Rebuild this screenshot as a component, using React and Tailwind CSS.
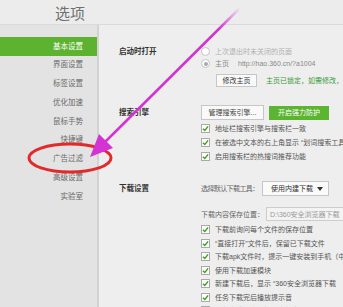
import React from 'react';

const font = "font-['Liberation_Sans','Noto_Sans_CJK_SC',sans-serif]";

const menu = ['基本设置', '界面设置', '标签设置', '优化加速', '鼠标手势', '快捷键', '广告过滤', '高级设置', '实验室'];

const Check = () => (
  <span className="w-[9px] h-[9px] border border-[#a9a9a9] bg-white flex items-center justify-center shrink-0">
    <svg width="7" height="7" viewBox="0 0 8 8">
      <path d="M1 4.2 L3.2 6.3 L7 1.6" fill="none" stroke="#3f9e22" strokeWidth="1.6" />
    </svg>
  </span>
);

const CheckRow = ({ text, h = 'h-[14px]' }) => (
  <div className={`${h} flex items-center gap-[5px] text-[#555] whitespace-nowrap`}>
    <Check />
    <span>{text}</span>
  </div>
);

const Radio = ({ on }) => (
  <span className="w-[9px] h-[9px] rounded-full border border-[#c4c4c4] bg-white flex items-center justify-center shrink-0">
    {on && <span className="w-[4px] h-[4px] rounded-full bg-[#a8a8a8]" />}
  </span>
);

export default function App() {
  return (
    <div className={`relative w-[343px] h-[307px] overflow-hidden bg-[#eeeeee] text-[7px] leading-none ${font}`}>
      {/* Header */}
      <div className="h-[25px] bg-[#ececec] border-b border-[#dadada] flex items-center pl-[55px]">
        <span className="text-[15px] text-[#707070] font-['Noto_Sans_CJK_SC',sans-serif]">选项</span>
      </div>

      <div className="flex h-[282px]">
        {/* Sidebar */}
        <div className="w-[99px] shrink-0 bg-[#e3e3e3] border-r-2 border-[#d2d2d2] pt-[12px] text-[7.5px]">
          {menu.map((m, i) => (
            <div
              key={m}
              className={`h-[18.75px] flex items-center justify-end pr-[14px] ${
                i === 0 ? 'bg-[#5db230] text-white' : 'text-[#6a6a6a]'
              }`}
            >
              {m}
            </div>
          ))}
        </div>

        {/* Content */}
        <div className="flex-1 pl-[20px] pt-[20px] whitespace-nowrap">
          {/* 启动时打开 */}
          <div className="flex">
            <div className="w-[82px] h-[12.5px] flex items-center text-[#333] font-bold text-[7.5px]">启动时打开</div>
            <div className="flex flex-col">
              <div className="h-[12.5px] flex items-center gap-[5px] text-[#b0b0b0]">
                <Radio />
                <span>上次退出时未关闭的页面</span>
              </div>
              <div className="h-[12.5px] flex items-center gap-[5px] text-[#8a8a8a]">
                <Radio on />
                <span>主页</span>
                <span className="ml-[4px]">http://hao.360.cn/?a1004</span>
              </div>
              <div className="mt-[4px] flex items-center pl-[15px]">
                <span className="h-[13px] w-[41px] border border-[#c6c6c6] bg-[#f9f9f9] text-[#333] flex items-center justify-center">
                  修改主页
                </span>
                <span className="ml-[9px] text-[#3a9b37]">主页已锁定，如需修改，</span>
              </div>
            </div>
          </div>

          {/* 搜索引擎 */}
          <div className="flex mt-[18px]">
            <div className="w-[82px] h-[15px] flex items-center text-[#333] font-bold text-[7.5px]">搜索引擎</div>
            <div className="flex flex-col">
              <div className="h-[15px] flex items-center gap-[5px]">
                <span className="h-[15px] w-[63px] border border-[#c6c6c6] bg-[#f9f9f9] text-[#444] flex items-center justify-center">
                  管理搜索引擎...
                </span>
                <span className="h-[14px] w-[60px] bg-[#5cb531] text-white flex items-center justify-center">
                  开启强力防护
                </span>
              </div>
              <div className="mt-[1px]">
                <CheckRow text="地址栏搜索引擎与搜索栏一致" />
                <CheckRow text="在被选中文本的右上角显示 “划词搜索工具”" />
                <CheckRow text="启用搜索栏的热搜词推荐功能" />
              </div>
            </div>
          </div>

          {/* 下载设置 */}
          <div className="flex mt-[18px]">
            <div className="w-[82px] h-[15px] flex items-center text-[#333] font-bold text-[7.5px]">下载设置</div>
            <div className="flex flex-col">
              <div className="h-[15px] flex items-center text-[#666]">
                <span className="w-[61px] tracking-[-0.6px]">选择默认下载工具：</span>
                <span className="h-[15px] w-[67px] border border-[#c6c6c6] bg-[#fafafa] text-[#333] flex items-center justify-between pl-[8px] pr-[5px]">
                  使用内建下载
                  <svg width="6" height="4" viewBox="0 0 6 4">
                    <path d="M0 0 H6 L3 4 Z" fill="#333" />
                  </svg>
                </span>
              </div>
              <div className="mt-[11px] h-[14px] flex items-center text-[#666]">
                <span className="w-[65px]">下载内容保存位置：</span>
                <span className="h-[14px] w-[100px] border border-[#cdcdcd] bg-[#f3f3f3] text-[#9a9a9a] flex items-center pl-[3px]">
                  D:\360安全浏览器下载
                </span>
              </div>
              <div className="mt-[2px]">
                <CheckRow h="h-[13.5px]" text="下载前询问每个文件的保存位置" />
                <CheckRow h="h-[13.5px]" text="“直接打开”文件后，保留已下载文件" />
                <CheckRow h="h-[13.5px]" text="下载apk文件时，提示一键安装到手机（中" />
                <CheckRow h="h-[13.5px]" text="使用下载加速模块" />
                <CheckRow h="h-[13.5px]" text="新建下载后，显示 “360安全浏览器下载" />
                <CheckRow h="h-[13.5px]" text="任务下载完后播放提示音" />
                <CheckRow h="h-[13.5px]" text="下载完成后自动打开文件夹" />
              </div>
            </div>
          </div>
        </div>
      </div>

      {/* Annotation overlay */}
      <svg className="absolute inset-0 pointer-events-none" width="343" height="307" viewBox="0 0 343 307">
        <defs>
          <linearGradient id="fade" x1="240" y1="8" x2="100" y2="146" gradientUnits="userSpaceOnUse">
            <stop offset="0" stopColor="#d233d2" stopOpacity="0" />
            <stop offset="0.15" stopColor="#d233d2" stopOpacity="1" />
            <stop offset="1" stopColor="#d233d2" stopOpacity="1" />
          </linearGradient>
        </defs>
        <ellipse cx="70" cy="158" rx="41" ry="14" fill="none" stroke="#e22a2a" strokeWidth="3" />
        <line x1="240" y1="8" x2="102" y2="145" stroke="url(#fade)" strokeWidth="2.5" />
        <polygon points="90,157 113,148 99,134" fill="#d233d2" />
      </svg>
    </div>
  );
}
